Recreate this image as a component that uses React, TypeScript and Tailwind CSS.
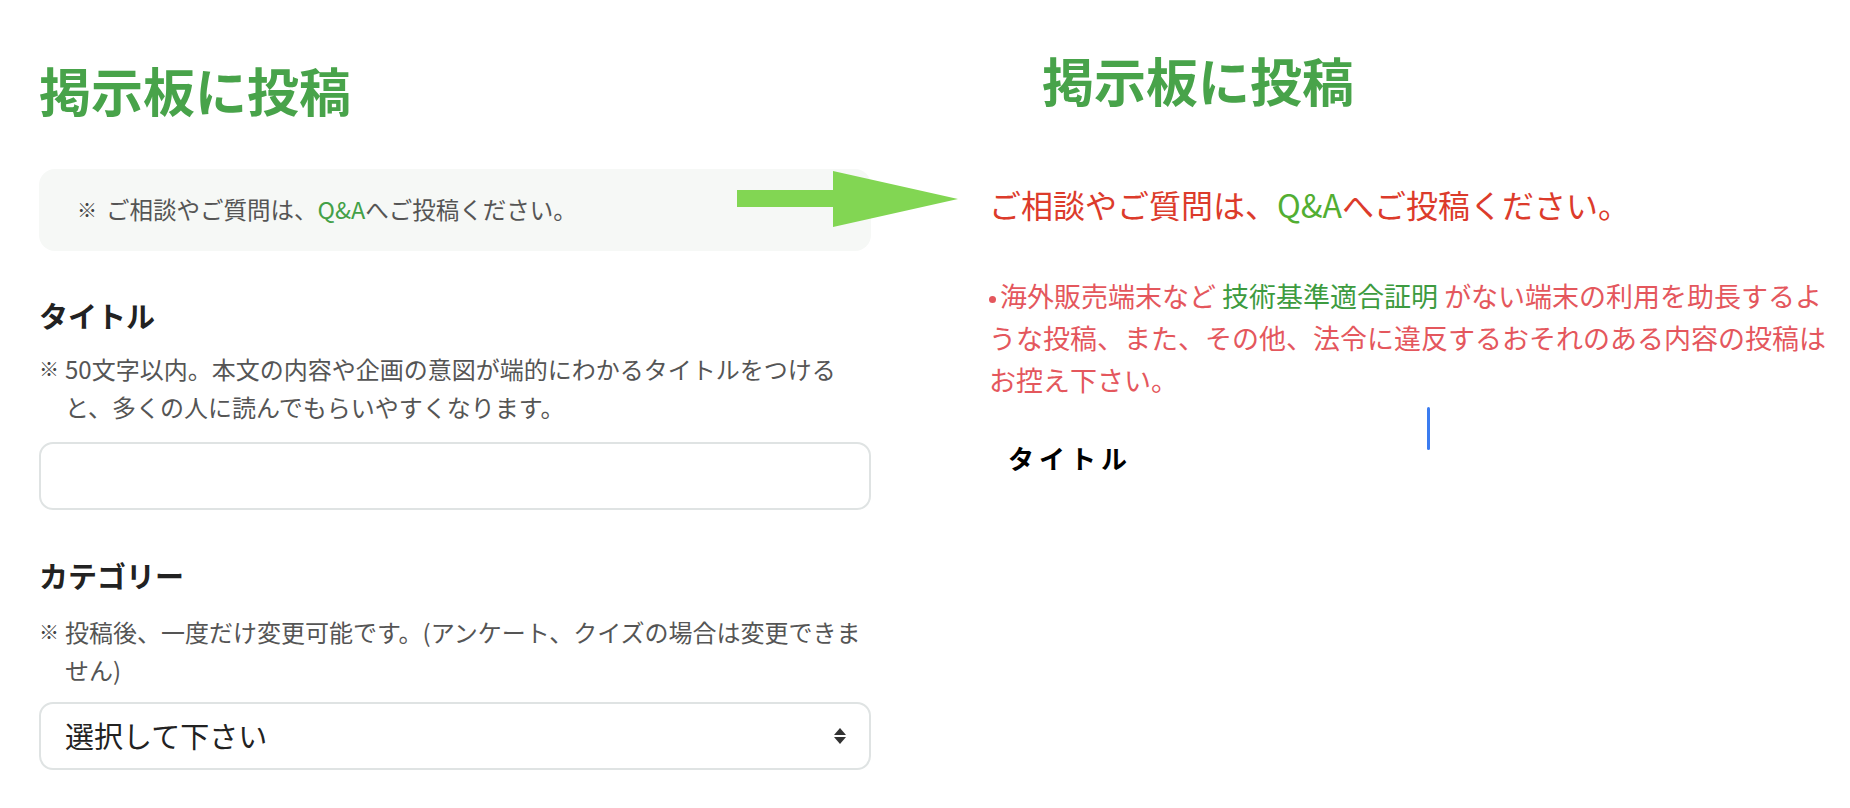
import React from "react";

function Note({ children }: { children: React.ReactNode }) {
  return (
    <div className="flex text-[24px] leading-[38px] text-[#555]">
      <span className="w-[26px] shrink-0 text-[20px] font-bold text-[#444]">※</span>
      <p className="whitespace-nowrap">{children}</p>
    </div>
  );
}

function Arrow() {
  return (
    <svg
      className="absolute left-[737px] top-[171px]"
      width="221"
      height="56"
      viewBox="0 0 221 56"
    >
      <path d="M0 19H96V0L221 28L96 56V36H0Z" fill="#82d653" />
    </svg>
  );
}

export default function App() {
  return (
    <div className="relative flex min-h-screen bg-white font-['Noto_Sans_CJK_JP',sans-serif]">
      <div className="ml-[39px] w-[832px]">
        <h1 className="mt-[64px] text-[52px] font-bold leading-none text-[#48a34a]">
          掲示板に投稿
        </h1>

        <div className="mt-[53px] flex h-[82px] items-center rounded-[16px] bg-[#f6f8f6] pl-[38px] text-[23.5px] text-[#555]">
          <span className="w-[29px] text-[20px] font-bold text-[#444]">※</span>
          <span>
            ご相談やご質問は、<span className="text-[#43a047]">Q&amp;A</span>
            へご投稿ください。
          </span>
        </div>

        <h2 className="mt-[50px] text-[29px] font-bold leading-[29px] text-[#222]">
          タイトル
        </h2>
        <div className="mt-[20px]">
          <Note>
            50文字以内。本文の内容や企画の意図が端的にわかるタイトルをつける
            <br />
            と、多くの人に読んでもらいやすくなります。
          </Note>
        </div>
        <input
          type="text"
          className="mt-[16px] h-[68px] w-full rounded-[14px] border-2 border-[#dfe3e3] px-[24px] text-[24px] outline-none"
        />

        <h2 className="mt-[51px] text-[29px] font-bold leading-[29px] text-[#222]">
          カテゴリー
        </h2>
        <div className="mt-[23px]">
          <Note>
            投稿後、一度だけ変更可能です。(アンケート、クイズの場合は変更できま
            <br />
            せん)
          </Note>
        </div>
        <div className="mt-[13px] flex h-[68px] w-full items-center justify-between rounded-[14px] border-2 border-[#dfe3e3] pl-[24px] pr-[22px]">
          <span className="text-[29px] text-[#222]">選択して下さい</span>
          <svg width="14" height="20" viewBox="0 0 14 20">
            <path d="M7 2L13 9H1Z" fill="#333" />
            <path d="M7 18L13 11H1Z" fill="#333" />
          </svg>
        </div>
      </div>

      <Arrow />

      <div className="ml-[118px] w-[850px]">
        <h1 className="ml-[53px] mt-[54px] text-[52px] font-bold leading-none text-[#48a34a]">
          掲示板に投稿
        </h1>
        <p className="mt-[82px] text-[32px] leading-[32px] text-[#dc3b2b]">
          ご相談やご質問は、<span className="text-[#52ae32]">Q&amp;A</span>
          へご投稿ください。
        </p>
        <p className="mt-[55px] whitespace-nowrap text-[27px] leading-[42px] text-[#e4575d]">
          <span className="mr-[4px] inline-block h-[7px] w-[7px] rounded-full bg-current align-middle" />
          海外販売端末など{" "}
          <span className="text-[#3d9b40]">技術基準適合証明</span>{" "}
          がない端末の利用を助長するよ
          <br />
          うな投稿、また、その他、法令に違反するおそれのある内容の投稿は
          <br />
          お控え下さい。
        </p>
        <div className="relative pt-[44px]">
          <span className="absolute left-[438px] top-[6px] h-[43px] w-[3px] rounded-full bg-[#3b7cf0]" />
          <h3 className="ml-[19px] text-[26px] font-bold leading-[26px] tracking-[5px] text-black">
            タイトル
          </h3>
        </div>
      </div>
    </div>
  );
}
